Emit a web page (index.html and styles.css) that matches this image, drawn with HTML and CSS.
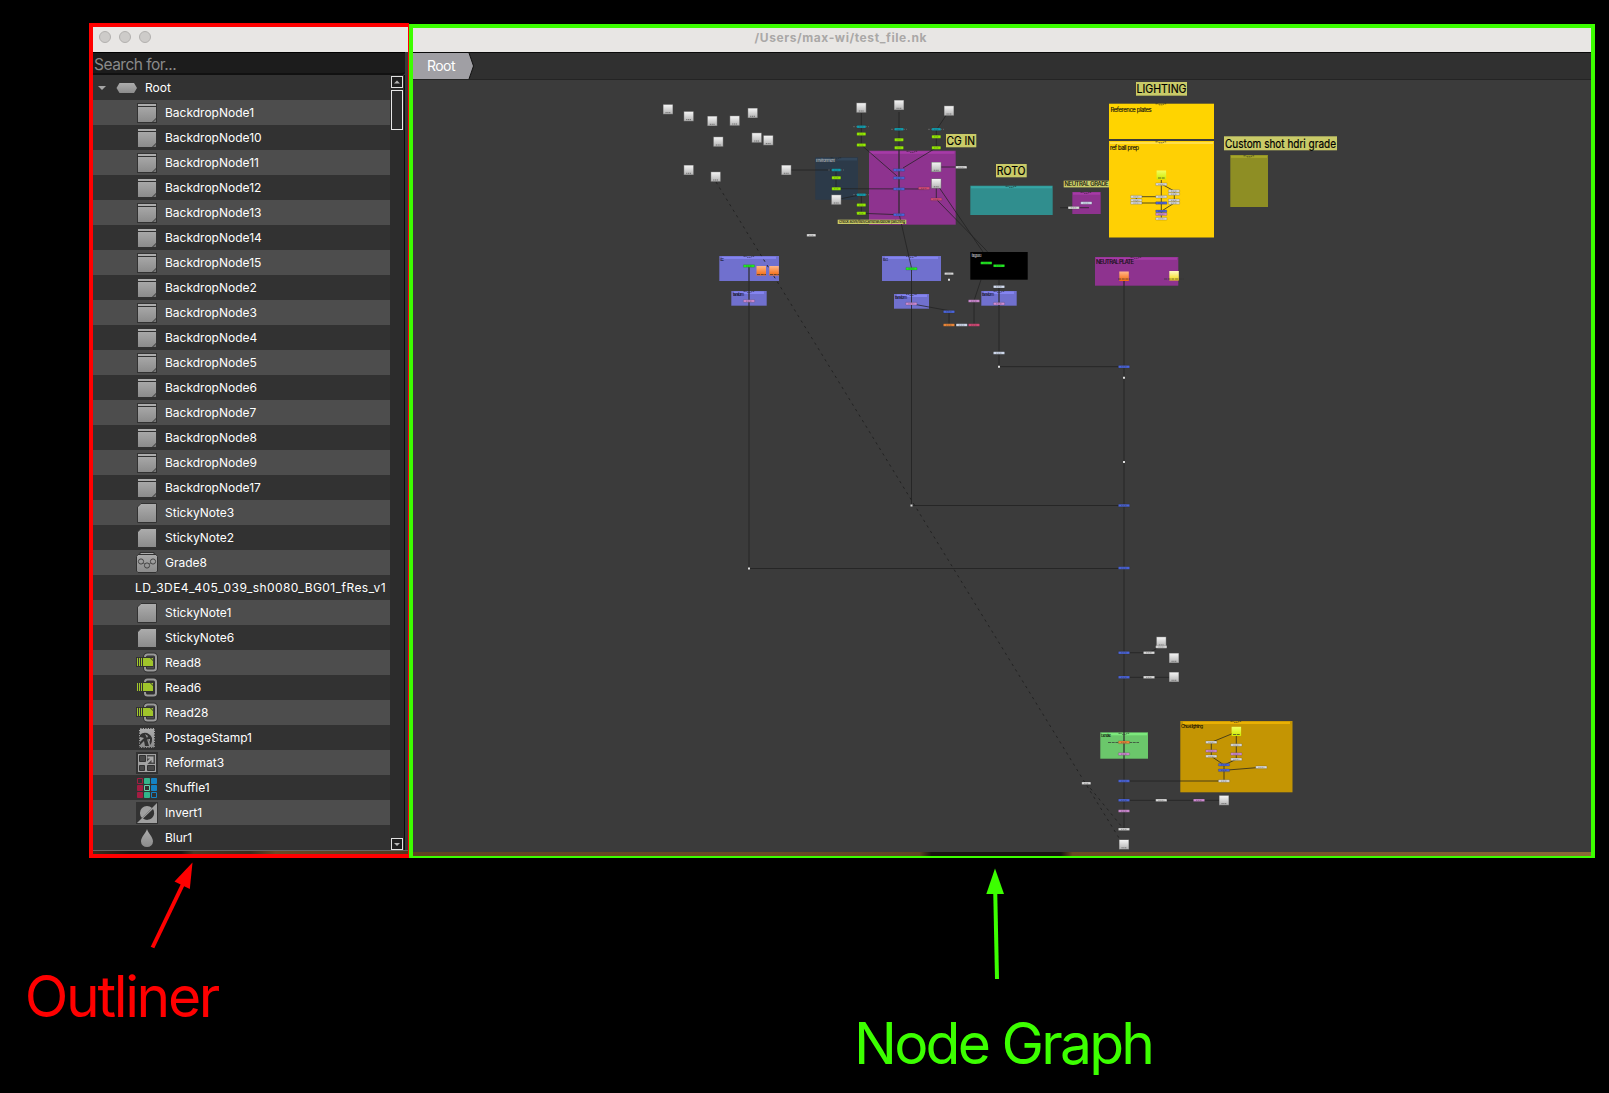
FILE: index.html
```html
<!DOCTYPE html>
<html lang="en">
<head>
<meta charset="utf-8">
<title>/Users/max-wi/test_file.nk</title>
<link rel="stylesheet" href="styles.css">
</head>
<body>
<svg class="defs" width="0" height="0" aria-hidden="true">
  <defs>
    <linearGradient id="gGrey" x2="0" y2="1"><stop offset="0" stop-color="#adadad"/><stop offset="1" stop-color="#8b8b8b"/></linearGradient>
    <linearGradient id="gWhite" x2="0" y2="1"><stop offset="0" stop-color="#f4f4f4"/><stop offset="1" stop-color="#b4b4b4"/></linearGradient>
    <linearGradient id="gOrange" x2="0" y2="1"><stop offset="0" stop-color="#ffb68a"/><stop offset="1" stop-color="#f56a0c"/></linearGradient>
    <linearGradient id="gYellow" x2="0" y2="1"><stop offset="0" stop-color="#fff9c4"/><stop offset="1" stop-color="#f5dc10"/></linearGradient>
    <linearGradient id="gLime" x2="0" y2="1"><stop offset="0" stop-color="#f2ff60"/><stop offset="1" stop-color="#cdea00"/></linearGradient>
    <symbol id="backdrop" viewBox="0 0 22 22"><path d="M1 1h20v20H1z" fill="#323232"/><path d="M2 2h18v2H2zM2 5h18v11l-4 4H2z" fill="url(#gGrey)"/><path d="M20 17v3h-3z" fill="#777"/></symbol>
    <symbol id="sticky" viewBox="0 0 22 22"><path d="M5 1.500h15.500v19h-19V5z" fill="url(#gGrey)" stroke="#323232"/></symbol>
    <symbol id="grade" viewBox="0 0 22 22"><path d="M4 .5h14v2h2l1.500 2V19l-1.500 1.500H2L.5 19V4.500l1.500-2h2z" fill="url(#gGrey)" stroke="#323232"/><path d="M4 2.500h14" stroke="#323232"/><g fill="none" stroke="#444"><circle cx="5" cy="9.500" r="2.600"/><circle cx="17" cy="9.500" r="2.600"/><circle cx="11" cy="13.500" r="2.600"/><path d="M7.500 11l1 1M14.500 11l-1 1"/></g></symbol>
    <symbol id="read" viewBox="0 0 22 22"><rect x="9" y="2.500" width="11" height="16" rx="2.500" fill="none" stroke="#303030" stroke-width="4"/><rect x="9" y="2.500" width="11" height="16" rx="2.500" fill="none" stroke="#9a9a9a" stroke-width="2"/><path d="M0 5h17.500v10H0z" fill="#323232"/><path d="M1 6h1v8H1zM3 6h1v8H3zM5 6h1v8H5zM7 6h7l3 3v5H7z" fill="#a0c52b"/><path d="M15 6h2v2z" fill="#a0c52b"/></symbol>
    <symbol id="stamp" viewBox="0 0 22 22"><path d="M3 1h16v20H3z" fill="url(#gGrey)"/><path d="M3 1h16v20H3z" fill="none" stroke="#323232" stroke-width="2" stroke-dasharray="1.300 1.200"/><path d="M4 8c4-4 10-2 12 3 0 3 0 5-2 7 0-3-1-5-3-6l2 7H9l-1-5-4 4v-3l4-4-4-1z" fill="#323232"/><path d="M9 7l3 2-1 2zM12 12l2 0 0 3z" fill="#999"/></symbol>
    <symbol id="reformat" viewBox="0 0 22 22"><path d="M0 0h22v22H0z" fill="#323232"/><path d="M2 2h18v18H2z" fill="#a0a0a0"/><path d="M3.500 3.500h6v6h-6zM3.500 13.500h5v5h-5zM11.500 13.500h7v5h-7z" fill="#484848" stroke="#323232"/><path d="M11 3h8v9h-8z" fill="#484848"/><path d="M9 13l7-7M11.500 5.500h5v5" fill="none" stroke="#a8a8a8" stroke-width="2"/></symbol>
    <symbol id="shuffle" viewBox="0 0 22 22"><g stroke-width="1"><path d="M1.500 1.500h5v5h-5z" fill="none" stroke="#a21d42"/><path d="M1.500 8.500h5v5h-5zM1.500 15.500h5v5h-5z" fill="#a21d42" stroke="#a21d42"/><path d="M8.500 1.500h5v5h-5zM8.500 15.500h5v5h-5z" fill="#33b48b" stroke="#33b48b"/><path d="M8.500 8.500h5v5h-5z" fill="none" stroke="#64d5ad"/><path d="M15.500 1.500h5v5h-5zM15.500 8.500h5v5h-5z" fill="#1583c4" stroke="#1583c4"/><path d="M15.500 15.500h5v5h-5z" fill="none" stroke="#1583c4"/></g></symbol>
    <symbol id="invert" viewBox="0 0 22 22"><path d="M0 0h22v22H0z" fill="#323232"/><path d="M21 1v20H1z" fill="#a0a0a0"/><path d="M16 6A7 7 0 0 0 6 16z" fill="#a0a0a0"/><path d="M17 7A7 7 0 0 1 7 16.500z" fill="#323232"/></symbol>
    <symbol id="blur" viewBox="0 0 22 22"><path d="M11 2c1 4 6 8 6 12.500a6 5.500 0 0 1-12 0C5 10 10 6 11 2z" fill="url(#gGrey)"/></symbol>
    <g id="sq"><path d="M0 0h10v10H0z" fill="#777"/><path d="M.5.500h9v9h-9z" fill="url(#gWhite)"/><path d="M2.500 8.300h5" stroke="#666" stroke-width=".9" stroke-dasharray="1.200 .6"/></g>
    <g id="pill"><rect x="-5.600" y="-1.300" width="11.200" height="2.600" rx=".4" stroke="#2c2c2c" stroke-width=".2"/><path d="M-3 .1h6" stroke="#333" stroke-opacity=".45" stroke-width=".8" stroke-dasharray="1.400 .5"/></g>
    <g id="tick"><path d="M-5.500 .8h2.500l1 1h4l1-1h2.500" fill="none" stroke="#222" stroke-opacity=".6" stroke-width="1" stroke-dasharray="1.500 .5"/></g>
  </defs>
</svg>

<main class="window">
  <section class="outliner">
    <header class="titlebar lights"><i></i><i></i><i></i></header>
    <div class="search">Search for...</div>
    <div class="tree">
      <ul class="rows">
        <li class="root"><svg width="39" height="12" viewBox="0 0 39 12"><path d="M0 4h8L4 8z" fill="#a5a5a5"/><path d="M21.500 1h14.500l3 5-3 5H21.500l-3-5z" fill="url(#gGrey)"/></svg>Root</li>
        <li><svg><use href="#backdrop"/></svg>BackdropNode1</li>
        <li><svg><use href="#backdrop"/></svg>BackdropNode10</li>
        <li><svg><use href="#backdrop"/></svg>BackdropNode11</li>
        <li><svg><use href="#backdrop"/></svg>BackdropNode12</li>
        <li><svg><use href="#backdrop"/></svg>BackdropNode13</li>
        <li><svg><use href="#backdrop"/></svg>BackdropNode14</li>
        <li><svg><use href="#backdrop"/></svg>BackdropNode15</li>
        <li><svg><use href="#backdrop"/></svg>BackdropNode2</li>
        <li><svg><use href="#backdrop"/></svg>BackdropNode3</li>
        <li><svg><use href="#backdrop"/></svg>BackdropNode4</li>
        <li><svg><use href="#backdrop"/></svg>BackdropNode5</li>
        <li><svg><use href="#backdrop"/></svg>BackdropNode6</li>
        <li><svg><use href="#backdrop"/></svg>BackdropNode7</li>
        <li><svg><use href="#backdrop"/></svg>BackdropNode8</li>
        <li><svg><use href="#backdrop"/></svg>BackdropNode9</li>
        <li><svg><use href="#backdrop"/></svg>BackdropNode17</li>
        <li><svg><use href="#sticky"/></svg>StickyNote3</li>
        <li><svg><use href="#sticky"/></svg>StickyNote2</li>
        <li><svg><use href="#grade"/></svg>Grade8</li>
        <li class="plain">LD_3DE4_405_039_sh0080_BG01_fRes_v1</li>
        <li><svg><use href="#sticky"/></svg>StickyNote1</li>
        <li><svg><use href="#sticky"/></svg>StickyNote6</li>
        <li><svg><use href="#read"/></svg>Read8</li>
        <li><svg><use href="#read"/></svg>Read6</li>
        <li><svg><use href="#read"/></svg>Read28</li>
        <li><svg><use href="#stamp"/></svg>PostageStamp1</li>
        <li><svg><use href="#reformat"/></svg>Reformat3</li>
        <li><svg><use href="#shuffle"/></svg>Shuffle1</li>
        <li><svg><use href="#invert"/></svg>Invert1</li>
        <li><svg><use href="#blur"/></svg>Blur1</li>
      </ul>
      <div class="scroll">
        <svg class="btn" viewBox="0 0 10 10"><path d="M2 6.500h6L5 3.500z" fill="#b5b5b5"/></svg>
        <div class="thumb"></div>
        <svg class="btn end" viewBox="0 0 10 10"><path d="M2 4h6L5 7z" fill="#b5b5b5"/></svg>
      </div>
      <div class="gutter"></div>
    </div>
    <div class="wood"></div>
  </section>

  <section class="graph">
    <header class="titlebar"><svg width="1178" height="24"><text x="341.500" y="14" textLength="172">/Users/max-wi/test_file.nk</text></svg></header>
    <nav class="crumbs"><svg width="62" height="26" viewBox="0 0 62 26"><path d="M0 0h56l4.500 13-4.500 13H0z" fill="#a09fa4"/><path d="M56 0l4.500 13-4.500 13" fill="none" stroke="#111"/><text x="14" y="18" textLength="28.500">Root</text></svg></nav>
    <svg class="canvas" width="1178" height="772" viewBox="413 80 1178 772">
      <g>
        <rect x="815.3" y="157.3" width="42.700" height="42.400" fill="#2c3a49"/><rect x="816" y="158" width="41" height="2.500" fill="#33475b"/>
        <rect x="869" y="150.700" width="86.700" height="74" fill="#8e338f"/><rect x="870" y="151.300" width="84.500" height="2.500" fill="#a63ba7"/>
        <rect x="970.300" y="185.700" width="82.400" height="29.300" fill="#308e8e"/><rect x="971" y="186.300" width="81" height="2" fill="#36a5a5"/>
        <rect x="1072.300" y="192" width="28.400" height="22" fill="#8e338f"/><rect x="1073" y="192.500" width="27" height="2.200" fill="#a63ba7"/>
        <rect x="1109" y="103.700" width="105" height="35.300" fill="#ffd400"/>
        <rect x="1109" y="141" width="105" height="96.500" fill="#ffd004"/><rect x="1110" y="142" width="103" height="2" fill="#ffdf4a"/>
        <rect x="1230.300" y="155" width="37.700" height="52" fill="#8e8e24"/><rect x="1231" y="155.700" width="36" height="2.200" fill="#a5a52a"/>
        <rect x="719.300" y="256" width="59.700" height="25" fill="#7070ce"/><rect x="722" y="256.700" width="54" height="2.200" fill="#8484f0"/>
        <rect x="731.300" y="291" width="35.400" height="14.700" fill="#7070ce"/><rect x="734" y="291.500" width="30" height="2.500" fill="#8484f0"/>
        <rect x="882" y="256" width="59" height="25" fill="#7070ce"/><rect x="885" y="256.700" width="53" height="2.200" fill="#8484f0"/>
        <rect x="894" y="294" width="35" height="14.700" fill="#7070ce"/><rect x="897" y="294.500" width="30" height="2.500" fill="#8484f0"/>
        <rect x="981.300" y="291" width="35.400" height="14.700" fill="#7070ce"/><rect x="984" y="291.500" width="30" height="2.500" fill="#8484f0"/>
        <rect x="1095" y="257" width="83.300" height="28.700" fill="#8e338f"/><rect x="1096" y="257.500" width="81" height="2.300" fill="#a63ba7"/>
        <rect x="1100.300" y="732.300" width="47.700" height="26.400" fill="#6bc76b"/><rect x="1102" y="733" width="45" height="2.300" fill="#7ce87c"/>
        <rect x="1180.300" y="721" width="112.200" height="71.300" fill="#c49503"/><rect x="1183" y="721.700" width="107" height="2.300" fill="#eab104"/>
      </g>
      <g>
        <use href="#tick" x="836" y="157"/><use href="#tick" x="912" y="150.500"/><use href="#tick" x="1011" y="185.500"/><use href="#tick" x="1086" y="191.500"/><use href="#tick" x="1161" y="103"/><use href="#tick" x="1161" y="141"/><use href="#tick" x="1249" y="155"/><use href="#tick" x="749" y="255.500"/><use href="#tick" x="749" y="290.500"/><use href="#tick" x="911.500" y="255.500"/><use href="#tick" x="911.500" y="293.500"/><use href="#tick" x="999" y="290.500"/><use href="#tick" x="1136" y="256.500"/><use href="#tick" x="1124" y="732.500"/><use href="#tick" x="1236" y="720.500"/>
      </g>

      <g class="wires">
        <path d="M861.3 113v32L897 176M949 111l-12.700 19v17.700L903 168M786 170h50v18.700L924 189M836 199.700l25.300-5v18.600l38 1.400L911.500 268M936.300 167h25M936.300 183.300v16L985 249l12 14M936.300 183.300L983 252M981 279.700l-7 21v24M949 311.700V325h25M911 303.700l38 7"/>
        <path d="M1060 207.700h29M1161.300 180v38.700M1161.300 184l13 7v12l-12.600 8M1136.300 196.700h25M1136.300 203h25M1136.300 197v6"/>
        <path d="M1161.300 646l-12.300 6.700h-25M1174 677.300h-50M1236.300 732l-25 10.300v14L1224 765v16h-100M1236.300 732v27.300L1224 765M1261.300 767.300L1224 770.300M1124 800.300h100"/>
      </g>
      <path class="trunk" d="M749 266v302.500M999 280v86.700M1124 280v549M899 112v102"/>
      <path class="trunk thin" d="M911.500 268v237.500h212.500M999 366.700h125M749 568.500h375"/>
      <rect x="970.300" y="252" width="57.400" height="27.700" fill="#000"/>
      <path class="dashes" d="M716 182L1119 838M1086.300 783.300L1122 827"/>

      <g>
        <use href="#sq" x="663" y="104.300"/><use href="#sq" x="683.700" y="111.300"/><use href="#sq" x="707.300" y="116"/><use href="#sq" x="729.700" y="115.700"/><use href="#sq" x="747.700" y="108"/><use href="#sq" x="713.300" y="136.700"/><use href="#sq" x="751.700" y="132.700"/><use href="#sq" x="763.300" y="135.300"/><use href="#sq" x="683.700" y="165"/><use href="#sq" x="710.700" y="171.700"/><use href="#sq" x="781.300" y="165"/><use href="#sq" x="856.300" y="102.700"/><use href="#sq" x="894" y="100"/><use href="#sq" x="944" y="105.700"/><use href="#sq" x="931.300" y="162"/><use href="#sq" x="931.300" y="178.500"/><use href="#sq" x="831.300" y="194.700"/><use href="#sq" x="1156.300" y="636.700"/><use href="#sq" x="1169" y="653"/><use href="#sq" x="1169" y="672"/><use href="#sq" x="1219" y="795.300"/><use href="#sq" x="1119" y="839.500"/>
      </g>
      <rect x="756.500" y="266" width="9.500" height="9.500" fill="url(#gOrange)"/><rect x="769.300" y="266" width="9.500" height="9.500" fill="url(#gOrange)"/><rect x="1119.300" y="271.500" width="9.500" height="9.500" fill="url(#gOrange)"/><rect x="1169.300" y="271" width="9.500" height="9.500" fill="url(#gYellow)"/><rect x="1156.600" y="170.500" width="9.500" height="9" fill="url(#gLime)"/><rect x="1231.600" y="726.800" width="9.500" height="9.200" fill="url(#gLime)"/>
      <path class="tags" d="M757 274.500h9M770 274.500h9M1118 279h12M1164 279h20M1158 178h7M1233 734.500h7M1108 742.500h11M1129 742.500h10"/>

      <path class="wings" d="M853 126.700h16M891 129.300h16M928 129.300h16M828 170h16M853 194.700h16"/>
      <g fill="#10a0b2"><use href="#pill" transform="translate(861.300 126.700) scale(.8 1)"/><use href="#pill" transform="translate(899 129.300) scale(.8 1)"/><use href="#pill" transform="translate(936.300 129.300) scale(.8 1)"/><use href="#pill" transform="translate(836.300 170) scale(.8 1)"/><use href="#pill" transform="translate(861.300 194.700) scale(.8 1)"/></g>
      <g fill="#98f000"><use href="#pill" transform="translate(861.300 134) scale(.8 1.100)"/><use href="#pill" transform="translate(861.300 145) scale(.8 1.100)"/><use href="#pill" transform="translate(899 139.700) scale(.8 1.100)"/><use href="#pill" transform="translate(899 147.700) scale(.8 1.100)"/><use href="#pill" transform="translate(936.300 136.700) scale(.8 1.100)"/><use href="#pill" transform="translate(936.300 147.700) scale(.8 1.100)"/><use href="#pill" transform="translate(836.300 177.700) scale(.8 1.100)"/><use href="#pill" transform="translate(836.300 188.700) scale(.8 1.100)"/><use href="#pill" transform="translate(861.300 205) scale(.8 1.100)"/><use href="#pill" transform="translate(861.300 213.300) scale(.8 1.100)"/></g>
      <g fill="#1ff01f"><use href="#pill" x="749" y="266"/><use href="#pill" x="911.500" y="268.700"/><use href="#pill" x="986.300" y="263"/><use href="#pill" x="999" y="265.700"/></g>
      <g fill="#4a64dc"><use href="#pill" x="899" y="170"/><use href="#pill" x="899" y="178"/><use href="#pill" x="899" y="189"/><use href="#pill" x="899" y="214.700"/><use href="#pill" x="1161.300" y="203"/><use href="#pill" x="1161.300" y="211.300"/><use href="#pill" x="949" y="311.700"/><use href="#pill" x="1124" y="366.700"/><use href="#pill" x="1124" y="505.500"/><use href="#pill" x="1124" y="568"/><use href="#pill" x="1124" y="652.700"/><use href="#pill" x="1124" y="677.300"/><use href="#pill" x="1224" y="764.700"/><use href="#pill" x="1224" y="770.300"/><use href="#pill" x="1124" y="781"/><use href="#pill" x="1124" y="800.300"/></g>
      <g fill="#d84a78"><use href="#pill" x="924" y="188.300"/><use href="#pill" x="936.300" y="199.300"/><use href="#pill" x="974" y="325"/></g>
      <g fill="#d08ad4"><use href="#pill" x="749" y="301"/><use href="#pill" x="911.300" y="303.700"/><use href="#pill" x="999" y="303.700"/><use href="#pill" x="974" y="301"/><use href="#pill" x="1161.300" y="214.200"/><use href="#pill" x="1124" y="754"/><use href="#pill" x="1211.300" y="751"/><use href="#pill" x="1236.300" y="754"/><use href="#pill" x="1199" y="800.300"/><use href="#pill" x="1124" y="811"/></g>
      <g fill="#f08838"><use href="#pill" x="949" y="325"/><use href="#pill" x="1124" y="742.300"/></g>
      <g fill="#d4def2"><use href="#pill" x="1086.300" y="203"/><use href="#pill" x="999" y="286.700"/><use href="#pill" x="961.700" y="325"/><use href="#pill" x="999" y="353"/></g>
      <g fill="#dadada"><use href="#pill" x="961.300" y="167.300"/><use href="#pill" transform="translate(811.300 235.300) scale(.8 1)"/><use href="#pill" x="1073.700" y="207.700"/><use href="#pill" transform="translate(949 273.700) scale(.8 .9)"/><use href="#pill" x="1161.300" y="184.300"/><use href="#pill" x="1174" y="191"/><use href="#pill" x="1174" y="194"/><use href="#pill" x="1161.300" y="196.700"/><use href="#pill" x="1136.300" y="196.700"/><use href="#pill" x="1136.300" y="200.300"/><use href="#pill" x="1136.300" y="203"/><use href="#pill" x="1174" y="200.300"/><use href="#pill" x="1174" y="203"/><use href="#pill" x="1161.300" y="218.700"/><use href="#pill" x="1161.300" y="646.900"/><use href="#pill" x="1149" y="652.700"/><use href="#pill" x="1149" y="677.300"/><use href="#pill" x="1211.300" y="742.300"/><use href="#pill" x="1236.300" y="745"/><use href="#pill" x="1211.300" y="756.300"/><use href="#pill" x="1236.300" y="759.300"/><use href="#pill" x="1261.300" y="767.300"/><use href="#pill" x="1224" y="781"/><use href="#pill" x="1161.300" y="800.300"/><use href="#pill" x="1124" y="829.300"/><use href="#pill" transform="translate(1086.300 783.300) scale(.8 1)"/></g>
      <path class="dots" d="M948 279.700h2M998 366.700h2M1123 377.700h2M1123 462h2M910.500 505.500h2M748 568.500h2"/>

      <g fill="#c9ca68"><rect x="946" y="134" width="30.300" height="13.300"/><rect x="996" y="164" width="30.700" height="13.300"/><rect x="1136" y="82" width="51" height="13.700"/><rect x="1224" y="136.300" width="113" height="14"/><rect x="1063.700" y="180.700" width="45.300" height="6.700"/><rect x="837.700" y="219.700" width="68.600" height="4.300"/></g>
      <g class="label">
        <text x="946.500" y="144.800" textLength="28.500" lengthAdjust="spacingAndGlyphs">CG IN</text>
        <text x="996.800" y="175" textLength="28.800" lengthAdjust="spacingAndGlyphs">ROTO</text>
        <text x="1136.500" y="93.200" textLength="50" lengthAdjust="spacingAndGlyphs">LIGHTING</text>
        <text x="1225" y="148" textLength="111" lengthAdjust="spacingAndGlyphs">Custom shot hdri grade</text>
      </g>
      <g class="small">
        <text x="1064.500" y="186" textLength="44">NEUTRAL GRADE</text>
        <text x="1110.500" y="112" textLength="41">Reference plates</text>
        <text x="1110" y="150" textLength="29">ref ball prep</text>
        <text x="1096" y="264" textLength="38">NEUTRAL PLATE</text>
      </g>
      <g class="tiny">
        <text x="839" y="223.300" textLength="66">check aovs/tiles/cameras/below patching</text>
        <text class="mid" x="1181" y="727.500" textLength="22">Cheat lighting</text>
        <text x="1101" y="737" textLength="10">Denoise</text>
        <text x="720" y="261" textLength="4">CC</text>
        <text x="733" y="296" textLength="11">transform</text>
        <text x="883" y="261" textLength="5">BG</text>
        <text x="895" y="299" textLength="12">transform</text>
        <text x="982" y="296" textLength="12">transform</text>
        <text x="816" y="162" textLength="19" fill="#ccc">Environment</text>
        <text x="971.500" y="257" textLength="10" fill="#aaa">foreground</text>
      </g>
    </svg>
    <div class="wood"></div>
  </section>
</main>

<svg class="notes" width="1609" height="235" viewBox="0 858 1609 235">
  <path d="M152.500 947.500L184 882" stroke="#f00" stroke-width="4"/><path d="M192.500 862.500L174.500 881.500 189.800 889z" fill="#f00"/>
  <path d="M997 979L995.200 890" stroke="#3cff00" stroke-width="4"/><path d="M995 868.500L986.300 894h17.700z" fill="#3cff00"/>
  <text x="24.800" y="1016.500" textLength="195.500" fill="#f00">Outliner</text>
  <text x="854" y="1063.500" textLength="301" fill="#3cff00">Node Graph</text>
</svg>
</body>
</html>
```
FILE: styles.css
```css
* { box-sizing: border-box; }
body {
  margin: 0;
  width: 1609px;
  height: 1093px;
  overflow: hidden;
  background: #000;
  font-family: Inter, "Liberation Sans", sans-serif;
  display: flex;
  flex-direction: column;
}
.defs { display: block; flex: none; height: 0; }
.window { display: flex; height: 835px; flex: none; margin-left: 89px; margin-top: 23px; }
.outliner {
  width: 320px;
  border: 4px solid #f00;
  border-right-width: 1px;
  background: #3a3a3a;
  display: flex;
  flex-direction: column;
}
.titlebar { height: 25px; flex: none; background: #e8e6e4; }
.titlebar svg { display: block; }
.titlebar text { font-size: 12px; font-weight: 700; fill: #aaa8a7; }
.lights { display: flex; gap: 8px; padding: 4px 6px; }
.lights i { width: 12px; height: 12px; border-radius: 50%; background: #cdcbc9; border: 1px solid #b3b1af; }
.search {
  height: 23px;
  flex: none;
  width: 312px;
  border-top: 1px solid #000;
  border-bottom: 2px solid #111;
  background: #1c1c1c;
  border-radius: 0 0 3px 0;
  color: #8a8a8a;
  font-size: 15.5px;
  line-height: 23px;
  padding-left: 1px;
  letter-spacing: -.5px;
}
.tree { display: flex; height: 776px; flex: none; border-bottom: 1px solid #666; }
.rows { list-style: none; margin: 0; padding: 0; width: 297px; }
.rows li {
  height: 25px;
  display: flex;
  align-items: center;
  padding-left: 43px;
  gap: 7px;
  background: #323232;
  color: #fff;
  font-size: 12px;
  letter-spacing: 0;
  white-space: nowrap;
}
.rows li:nth-child(even) { background: #4d4d4d; }
.rows li svg { width: 22px; height: 22px; flex: none; }
.rows .plain { padding-left: 42px; letter-spacing: .44px; }
.rows .root { padding-left: 5px; gap: 8px; }
.rows .root svg { width: 39px; height: 12px; }
.scroll { width: 14px; background: #2c2c2c; display: flex; flex-direction: column; padding: 1px 1px 0; gap: 2px; }
.btn { width: 12px; height: 12px; border: 1px solid #e0e0e0; background: #1f1f1f; flex: none; }
.thumb { width: 12px; height: 40px; border: 1px solid #e8e8e8; background: #2c2c2c; }
.end { margin-top: auto; }
.gutter { width: 4px; background: #383838; border-left: 1px solid #0c0c0c; }
.wood {
  flex: 1;
  background: linear-gradient(90deg, #3c2e20, #1c1712 12%, #1c1712 28%, #4a3a25 32%, #3a2c1c 50%, #6a4b26 58%, #51391f 100%);
}
.graph .wood { background: linear-gradient(90deg, #5f4322, #6a4b26 30%, #5f4425 43%, #17120f 44%, #17120f 55%, #6b4a24 56%, #755229 75%, #8a6b38 100%); }
.graph {
  width: 1186px;
  margin-top: 1px;
  border: 4px solid #3cff00;
  border-bottom-width: 2px;
  display: flex;
  flex-direction: column;
  background: #3a3a3a;
}
.graph .titlebar { height: 24px; }
.crumbs { height: 28px; flex: none; background: #303030; border-top: 1px solid #0a0a0a; border-bottom: 1px solid #242424; }
.crumbs svg { display: block; }
.crumbs text { font-size: 14px; fill: #fff; }
.canvas { display: block; flex: none; background: #3b3b3b; }
.wires path { fill: none; stroke: #222; stroke-width: 1; stroke-opacity: .75; }
.trunk { fill: none; stroke: #2a2a2a; stroke-width: 1.5; stroke-opacity: .8; }
.thin { stroke: #222; stroke-width: 1; }
.dashes { fill: none; stroke: #222; stroke-width: 1; stroke-dasharray: 2.5 4; }
.tags { stroke: #333; stroke-opacity: .7; stroke-dasharray: 3 .7; }
.wings { stroke: #aaa; stroke-opacity: .35; stroke-dasharray: 2 1; }
.dots { stroke: #ddd; stroke-width: 2; }
.label text { font-size: 11.8px; fill: #000; stroke: #000; stroke-width: .2px; }
.small text { font-size: 5.8px; fill: #111; stroke: #111; stroke-width: .15px; }
.tiny text { font-size: 3.8px; }
.tiny .mid { font-size: 4.6px; }
.notes { display: block; flex: none; }
.notes text { font-size: 57px; }
```
